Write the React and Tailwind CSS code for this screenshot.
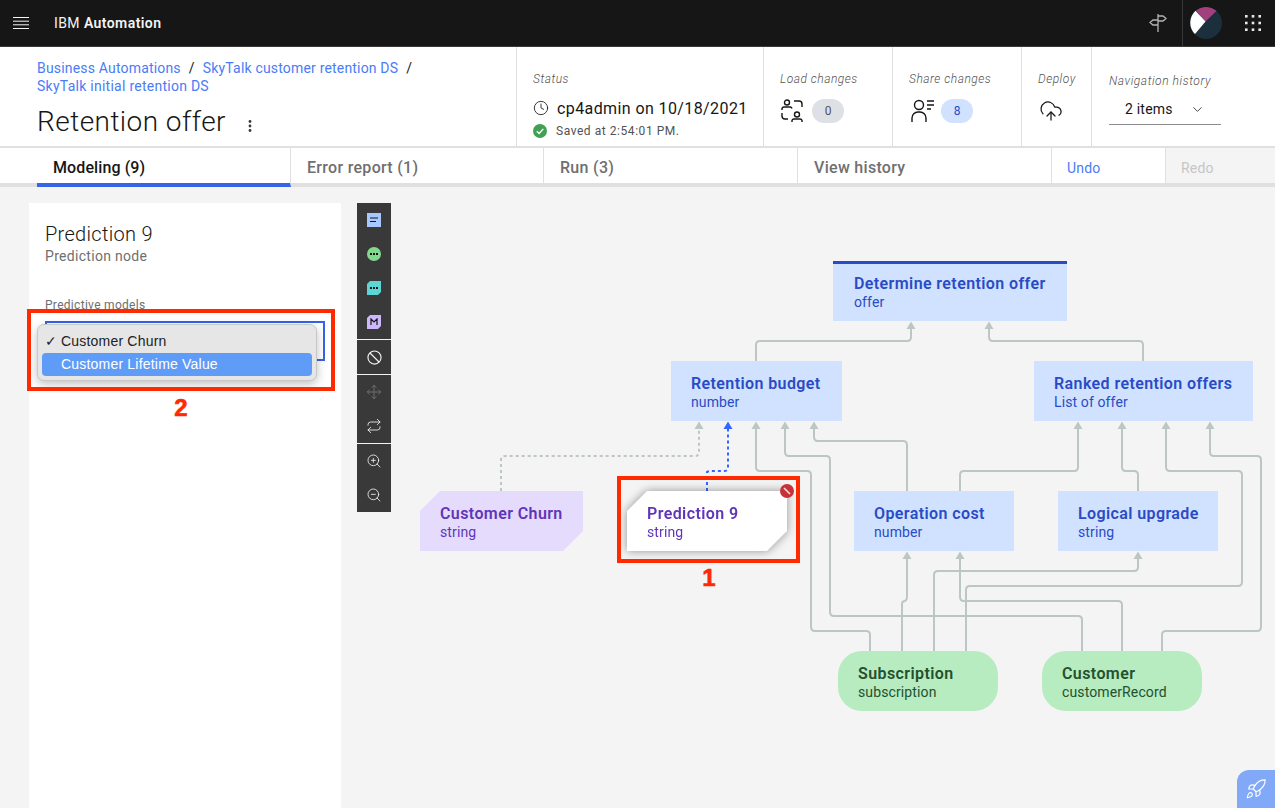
import { ChevronDown, Clock, CloudUpload, Move, Repeat, Rocket, ZoomIn, ZoomOut } from 'lucide-react';

const FONT = { fontFamily: 'Roboto, "Noto Sans", sans-serif' };

const BLUE_NODE = 'bg-[#d0e2ff] text-[#2a4bc6]';

function NodeText({ title, sub }) {
    return (
        <>
            <div className="text-base leading-[20px] font-semibold tracking-[0.4px]">{title}</div>
            <div className="text-sm leading-[18px] -mt-px tracking-[0.12px]">{sub}</div>
        </>
    );
}

function HamburgerIcon() {
    return (
        <svg width="16" height="12" viewBox="0 0 16 12" stroke="#f4f4f4" strokeWidth="1">
            <path d="M0 .5h16M0 4.2h16M0 7.8h16M0 11.5h16" />
        </svg>
    );
}

function SignpostIcon() {
    return (
        <svg width="18" height="20" viewBox="0 0 18 20" fill="none" stroke="#b5b5b5" strokeWidth="1.3">
            <path d="M9 1v18" />
            <path d="M9 3h5l3 2.5L14 8H9" />
            <path d="M9 7H4L1 9.5 4 12h5" />
        </svg>
    );
}

function Avatar() {
    return (
        <svg width="32" height="32" viewBox="0 0 32 32">
            <circle cx="16" cy="16" r="16" fill="#1c2f3c" />
            <path d="M6 3.5A16 16 0 0 1 26 3.5L26.5 4 15.5 14.5 6 3.5Z" fill="#a23f7f" />
            <path d="M5.5 3.8 15.5 14.5 5 27A16 16 0 0 1 5.5 3.8Z" fill="#ffffff" />
        </svg>
    );
}

function GridIcon() {
    return (
        <svg width="16" height="16" viewBox="0 0 16 16" fill="#e8e8e8">
            <rect x="0" y="0" width="2.6" height="2.6" />
            <rect x="6.7" y="0" width="2.6" height="2.6" />
            <rect x="13.4" y="0" width="2.6" height="2.6" />
            <rect x="0" y="6.7" width="2.6" height="2.6" />
            <rect x="6.7" y="6.7" width="2.6" height="2.6" />
            <rect x="13.4" y="6.7" width="2.6" height="2.6" />
            <rect x="0" y="13.4" width="2.6" height="2.6" />
            <rect x="6.7" y="13.4" width="2.6" height="2.6" />
            <rect x="13.4" y="13.4" width="2.6" height="2.6" />
        </svg>
    );
}

function LoadIcon() {
    return (
        <svg width="22" height="24" viewBox="0 0 22 24" fill="none" stroke="#161616" strokeWidth="1.4">
            <circle cx="6" cy="3.5" r="2.5" />
            <path d="M1 11V9.5A2 2 0 0 1 3 8h6a2 2 0 0 1 2 1.5" />
            <circle cx="16" cy="15.5" r="2.5" />
            <path d="M11 23v-1.5a2 2 0 0 1 2-1.5h6a2 2 0 0 1 2 1.5V23" />
            <path d="M13 2h5a3 3 0 0 1 3 3v3" />
            <path d="M1 14v3a3 3 0 0 0 3 3h3" />
        </svg>
    );
}

function ShareIcon() {
    return (
        <svg width="24" height="24" viewBox="0 0 24 24" fill="none" stroke="#161616" strokeWidth="1.4">
            <circle cx="8" cy="6" r="4.5" />
            <path d="M1 23v-4a6 6 0 0 1 6-6h2a6 6 0 0 1 6 6v4" />
            <path d="M16 2h7M16 6h7M16 10h4" />
        </svg>
    );
}

function SavedIcon() {
    return (
        <svg width="14" height="14" viewBox="0 0 14 14">
            <circle cx="7" cy="7" r="7" fill="#42a054" />
            <path d="M3.8 7.2 6.1 9.5 10.3 4.9" fill="none" stroke="#ffffff" strokeWidth="1.4" />
        </svg>
    );
}

function ToolShape({ children, className }) {
    return <div className={`w-[14px] h-[14px] flex items-center justify-center ${className}`}>{children}</div>;
}

function ToolBar() {
    const row = 'h-[34px] flex items-center justify-center';
    const sep = <div className="h-px bg-[#f4f4f4]" />;
    return (
        <div className="ml-4 mt-4 w-[34px] h-[309px] bg-[#393939] flex flex-col text-[#161616]">
            <div className={row}>
                <ToolShape className="bg-[#a6c8ff]">
                    <svg width="10" height="6" viewBox="0 0 10 6" stroke="#161616" strokeWidth="1"><path d="M1 1h8M1 4.5h6" /></svg>
                </ToolShape>
            </div>
            <div className={row}>
                <ToolShape className="bg-[#82d88f] rounded-full">
                    <svg width="8" height="2" viewBox="0 0 8 2" fill="#161616"><path d="M0 0h2v2H0zM3 0h2v2H3zM6 0h2v2H6z" /></svg>
                </ToolShape>
            </div>
            <div className={row}>
                <ToolShape className="bg-[#5cd5d5] [clip-path:polygon(3px_0,100%_0,100%_11px,11px_100%,0_100%,0_3px)]">
                    <svg width="8" height="2" viewBox="0 0 8 2" fill="#161616"><path d="M0 0h2v2H0zM3 0h2v2H3zM6 0h2v2H6z" /></svg>
                </ToolShape>
            </div>
            <div className={row}>
                <ToolShape className="bg-[#cdb8fb] [clip-path:polygon(3px_0,100%_0,100%_11px,11px_100%,0_100%,0_3px)]">
                    <svg width="8" height="8" viewBox="0 0 8 8" fill="none" stroke="#161616" strokeWidth="1.2"><path d="M1 7V1l3 3 3-3v6" /></svg>
                </ToolShape>
            </div>
            {sep}
            <div className={row}>
                <svg width="15" height="15" viewBox="0 0 16 16" fill="none" stroke="#f4f4f4" strokeWidth="1.2">
                    <circle cx="8" cy="8" r="7" />
                    <path d="M3.2 3.2 12.8 12.8" />
                </svg>
            </div>
            {sep}
            <div className={row}><Move size={16} strokeWidth={1.5} color="#6f6f6f" /></div>
            <div className={row}><Repeat size={16} strokeWidth={1.25} color="#f4f4f4" /></div>
            {sep}
            <div className={row}><ZoomIn size={16} strokeWidth={1.25} color="#f4f4f4" /></div>
            <div className={row}><ZoomOut size={16} strokeWidth={1.25} color="#f4f4f4" /></div>
        </div>
    );
}

function Edges() {
    const solid = [
        'M756 361V345Q756 341 760 341H907Q911 341 911 337V328',
        'M1143 361V345Q1143 341 1139 341H993Q989 341 989 337V328',
        'M870 651V635Q870 631 866 631H815Q811 631 811 627V475Q811 471 807 471H760Q756 471 756 467V428',
        'M1082 651V620Q1082 616 1078 616H834Q830 616 830 612V460Q830 456 826 456H789Q785 456 785 452V428',
        'M907 491V445Q907 441 903 441H818Q814 441 814 437V428',
        'M960 491V475Q960 471 964 471H1074Q1078 471 1078 467V428',
        'M1138 491V475Q1138 471 1134 471H1126Q1122 471 1122 467V428',
        'M966 651V590Q966 586 970 586H1238Q1242 586 1242 582V475Q1242 471 1238 471H1170Q1166 471 1166 467V428',
        'M1162 651V635Q1162 631 1166 631H1257Q1261 631 1261 627V460Q1261 456 1257 456H1214Q1210 456 1210 452V428',
        'M902 651V604Q902 601 905 601Q907 600 907 597V558',
        'M1122 651V605Q1122 601 1118 601H964Q960 601 960 597V558',
        'M934 651V575Q934 571 938 571H1134Q1138 571 1138 567V558',
    ];
    const heads = [
        [911, 321.5], [989, 321.5], [756, 421.5], [785, 421.5], [814, 421.5], [1078, 421.5], [1122, 421.5],
        [1166, 421.5], [1210, 421.5], [907, 551.5], [960, 551.5], [1138, 551.5], [699, 421.5],
    ];
    return (
        <svg className="absolute left-0 top-0" width="884" height="621" viewBox="391 187 884 621" fill="none">
            {solid.map((d) => (
                <path key={d} d={d} stroke="#bcc6c2" strokeWidth="2" />
            ))}
            <path d="M501 491V460Q501 456 505 456H695Q699 456 699 452V429" stroke="#bcc6c2" strokeWidth="2" strokeDasharray="3 3" />
            <path d="M707 491V472Q709 471 711 471H724Q728 471 728 467V429" stroke="#3366ff" strokeWidth="2" strokeDasharray="3 3" />
            {heads.map(([x, y]) => (
                <path key={`${x}-${y}`} d={`M${x} ${y}l4.5 7.5h-9z`} fill="#bcc6c2" />
            ))}
            <path d="M728 421.5l4.5 7.5h-9z" fill="#3366ff" />
        </svg>
    );
}

function Canvas() {
    const blueBox = `absolute h-[60px] flex flex-col pt-[13px] ${BLUE_NODE}`;
    const greenBox = 'absolute h-[60px] w-[160px] top-[464px] pl-5 pt-[13px] flex flex-col rounded-[24px] bg-[#b7ebc0] text-[#23512f]';
    return (
        <div className="relative flex-1">
            <Edges />
            <div className={`${blueBox} left-[442px] top-[74px] w-[234px] pl-[21px] !pt-[10px] border-t-[3px] border-[#2a4bc6]`}>
                <NodeText title="Determine retention offer" sub="offer" />
            </div>
            <div className={`${blueBox} left-[280px] top-[174px] w-[171px] pl-5`}>
                <NodeText title="Retention budget" sub="number" />
            </div>
            <div className={`${blueBox} left-[643px] top-[174px] w-[219px] pl-5`}>
                <NodeText title="Ranked retention offers" sub="List of offer" />
            </div>
            <div className={`${blueBox} left-[463px] top-[304px] w-[160px] pl-5`}>
                <NodeText title="Operation cost" sub="number" />
            </div>
            <div className={`${blueBox} left-[667px] top-[304px] w-[160px] pl-5`}>
                <NodeText title="Logical upgrade" sub="string" />
            </div>
            <div className={`${greenBox} left-[447px]`}>
                <NodeText title="Subscription" sub="subscription" />
            </div>
            <div className={`${greenBox} left-[651px]`}>
                <NodeText title="Customer" sub="customerRecord" />
            </div>
            <div className="absolute left-[29px] top-[304px] w-[163px] h-[60px] pl-5 pt-[13px] flex flex-col bg-[#e5dbfc] text-[#6135b8] [clip-path:polygon(20px_0,100%_0,100%_40px,143px_100%,0_100%,0_20px)]">
                <NodeText title="Customer Churn" sub="string" />
            </div>
            <div className="absolute left-[236px] top-[304px] w-[160px] h-[60px] drop-shadow-[0_0_5px_rgba(0,0,0,0.4)]">
                <div className="h-full pl-5 pt-[13px] flex flex-col bg-white text-[#6135b8] [clip-path:polygon(20px_0,100%_0,100%_40px,140px_100%,0_100%,0_20px)]">
                    <NodeText title="Prediction 9" sub="string" />
                </div>
            </div>
            <svg className="absolute left-[389px] top-[297px]" width="14" height="14" viewBox="0 0 14 14">
                <circle cx="7" cy="7" r="7" fill="#c5323a" />
                <path d="M4 4 10 10" stroke="#f4dcdc" strokeWidth="1.6" />
            </svg>
            <div className="absolute left-[226px] top-[289px] w-[183px] h-[87px] border-4 border-[#ff2a00]" />
            <div className="absolute left-[308px] top-[378px] w-[20px] text-center text-[24px] leading-[26px] font-bold text-[#ff2a00] [-webkit-text-stroke:0.6px_#ff2a00] [font-family:'Liberation_Sans',sans-serif]">1</div>
            <div className="absolute right-0 bottom-0 w-[38px] h-[38px] rounded-tl-[12px] bg-[#82a9f7] flex items-center justify-center">
                <Rocket size={22} strokeWidth={1.25} color="#ffffff" />
            </div>
        </div>
    );
}

function SidePanel() {
    return (
        <div className="ml-[29px] mt-4 w-[312px] bg-white px-4 pt-[19px]">
            <div className="text-xl leading-[24px] font-light text-[#161616] tracking-[0.3px]">Prediction 9</div>
            <div className="text-sm leading-[18px] mt-[1px] text-[#6f6f6f] tracking-[0.3px]">Prediction node</div>
            <div className="text-xs leading-[16px] mt-[32px] text-[#6f6f6f] tracking-[0.3px]">Predictive models</div>
            <div className="mt-2 h-[40px] border-2 border-[#3563e9]" />
        </div>
    );
}

function PopupMenu() {
    return (
        <>
            <div className="absolute left-[37px] top-[137px] w-[280px] h-[57px] rounded-[7px] border border-[#c8c8c8] bg-[#e6e6e6] shadow-[0_3px_10px_rgba(0,0,0,0.25)] px-[4px] pt-[5px] text-sm leading-[22px] text-[#222222] tracking-[0.2px] [font-family:'Liberation_Sans',sans-serif]">
                <div className="pl-[3px] flex h-[22px]">
                    <span className="w-[16px]">✓</span>
                    <span>Customer Churn</span>
                </div>
                <div className="h-[23px] mt-px rounded-[4px] bg-[#5f9cf7] text-white pl-[19px]">Customer Lifetime Value</div>
            </div>
            <div className="absolute left-[27px] top-[122px] w-[308px] h-[82px] border-4 border-[#ff2a00]" />
            <div className="absolute left-[171px] top-[208px] w-[20px] text-center text-[24px] leading-[26px] font-bold text-[#ff2a00] [-webkit-text-stroke:0.6px_#ff2a00] [font-family:'Liberation_Sans',sans-serif]">2</div>
        </>
    );
}

function TopBar() {
    return (
        <div className="h-[47px] bg-[#161616] border-b border-[#393939] flex items-center">
            <div className="ml-[13px] w-[41px]"><HamburgerIcon /></div>
            <div className="text-sm text-[#f4f4f4] tracking-[0.42px]">IBM <span className="font-semibold">Automation</span></div>
            <div className="ml-auto mr-[15px]"><SignpostIcon /></div>
            <div className="h-full w-[47px] border-l border-[#393939] flex items-center pl-[7px]"><Avatar /></div>
            <div className="ml-[16px] mr-[14px]"><GridIcon /></div>
        </div>
    );
}

function Meta({ label, className, children }) {
    return (
        <div className={`border-r border-[#e0e0e0] pt-[24px] ${className}`}>
            <div className="text-xs leading-[16px] italic font-light text-[#525252] tracking-[0.5px]">{label}</div>
            {children}
        </div>
    );
}

function SubHeader() {
    return (
        <div className="h-[101px] bg-white border-b-2 border-[#e0e0e0] flex">
            <div className="w-[517px] border-r border-[#e0e0e0] pl-[37px] pt-[12px]">
                <div className="w-[400px] text-sm leading-[18px] text-[#4a7cf6] tracking-[0.18px]">
                    <span>Business Automations</span>
                    <span className="text-[#161616] mx-[8px]">/</span>
                    <span>SkyTalk customer retention DS</span>
                    <span className="text-[#161616] mx-[8px]">/</span>
                    <div className="tracking-[0.26px]">SkyTalk initial retention DS</div>
                </div>
                <div className="mt-[9px] flex items-center">
                    <div className="text-[28px] leading-[36px] font-light text-[#161616] tracking-[0.45px]">Retention offer</div>
                    <svg className="ml-[22px] mt-[8px]" width="4" height="12" viewBox="0 0 4 12" fill="#393939">
                        <circle cx="2" cy="1.5" r="1.4" />
                        <circle cx="2" cy="6" r="1.4" />
                        <circle cx="2" cy="10.5" r="1.4" />
                    </svg>
                </div>
            </div>
            <Meta label="Status" className="w-[247px] pl-[16px]">
                <div className="mt-[10px] flex items-center h-[24px] text-base text-[#161616] tracking-[0.4px]">
                    <Clock className="-mt-[2px]" size={16} strokeWidth={1.25} />
                    <span className="ml-[8px]">cp4admin on 10/18/2021</span>
                </div>
                <div className="mt-[2px] flex items-center text-xs leading-[16px] text-[#525252] tracking-[0.55px]">
                    <SavedIcon />
                    <span className="ml-[9px]">Saved at 2:54:01 PM.</span>
                </div>
            </Meta>
            <Meta label="Load changes" className="w-[129px] pl-[16px]">
                <div className="mt-[12px] flex items-center">
                    <div className="ml-[1px]"><LoadIcon /></div>
                    <div className="ml-[9px] w-[32px] h-[24px] rounded-[12px] bg-[#dde1e6] flex items-center justify-center text-xs text-[#525252]">0</div>
                </div>
            </Meta>
            <Meta label="Share changes" className="w-[129px] pl-[16px]">
                <div className="mt-[12px] flex items-center">
                    <div className="ml-[2px]"><ShareIcon /></div>
                    <div className="ml-[6px] w-[32px] h-[24px] rounded-[12px] bg-[#d0e2ff] flex items-center justify-center text-xs text-[#2a4bc6]">8</div>
                </div>
            </Meta>
            <Meta label="Deploy" className="w-[70px] pl-[16px]">
                <div className="mt-[12px] ml-[1px] text-[#161616]"><CloudUpload size={24} strokeWidth={1.25} /></div>
            </Meta>
            <div className="flex-1 pl-[17px] pt-[26px]">
                <div className="text-xs leading-[16px] italic font-light text-[#525252] tracking-[0.55px]">Navigation history</div>
                <div className="mt-[5px] w-[112px] h-[31px] border-b border-[#8d8d8d] pl-[16px] flex items-center text-sm text-[#161616] tracking-[0.2px]">
                    <span>2 items</span>
                    <ChevronDown className="ml-[17px]" size={15} strokeWidth={1.25} />
                </div>
            </div>
        </div>
    );
}

function Tab({ label, className }) {
    return (
        <div className={`h-full flex items-center border-r border-[#e0e0e0] pl-4 pt-[4px] text-base font-medium text-[#6f6f6f] tracking-[0.3px] ${className}`}>
            {label}
        </div>
    );
}

function TabBar() {
    return (
        <div className="h-[39px] bg-white border-b-4 border-[#e0e0e0] flex relative">
            <div className="w-[37px]" />
            <div className="w-[254px] h-[39px] border-b-4 border-[#3563e9] border-r border-r-[#e0e0e0] pl-4 pt-[4px] flex items-center text-base font-medium text-[#161616] tracking-[0.1px]">
                Modeling (9)
            </div>
            <Tab label="Error report (1)" className="w-[253px]" />
            <Tab label="Run (3)" className="w-[254px]" />
            <Tab label="View history" className="w-[254px]" />
            <div className="w-[114px] h-full border-r border-[#e0e0e0] pl-[15px] pt-[4px] flex items-center text-sm text-[#4a7cf6] tracking-[0.2px]">Undo</div>
            <div className="flex-1 h-full bg-[#f4f4f4] pl-[15px] pt-[4px] flex items-center text-sm text-[#c6c6c6] tracking-[0.2px]">Redo</div>
        </div>
    );
}

export default function App() {
    return (
        <div className="h-[808px] overflow-hidden bg-[#f4f4f4] flex flex-col" style={FONT}>
            <TopBar />
            <SubHeader />
            <TabBar />
            <div className="relative flex-1 flex">
                <SidePanel />
                <ToolBar />
                <Canvas />
                <PopupMenu />
            </div>
        </div>
    );
}
